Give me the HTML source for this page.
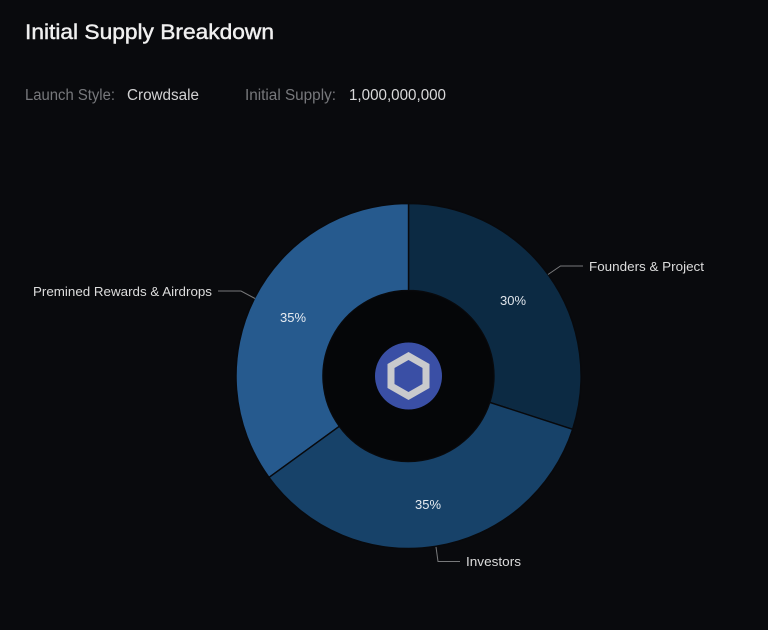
<!DOCTYPE html>
<html>
<head>
<meta charset="utf-8">
<style>
html,body{margin:0;padding:0;background:#090a0d;}
body{width:768px;height:630px;overflow:hidden;position:relative;}
svg{position:absolute;left:0;top:0;}
text{font-family:"Liberation Sans",sans-serif;}
</style>
</head>
<body>
<svg width="768" height="630" viewBox="0 0 768 630" xmlns="http://www.w3.org/2000/svg">
  <defs><filter id="s" x="-5%" y="-20%" width="110%" height="140%"><feGaussianBlur stdDeviation="0.3"/></filter></defs>
  <rect width="768" height="630" fill="#090a0d"/>
  <g filter="url(#s)">
  <text x="25" y="39" font-size="21" fill="#f0f0f0" stroke="#f0f0f0" stroke-width="0.45" textLength="249" lengthAdjust="spacingAndGlyphs">Initial Supply Breakdown</text>
  <text x="25" y="100" font-size="15.5" fill="#77787b" textLength="90" lengthAdjust="spacingAndGlyphs">Launch Style:</text>
  <text x="127" y="100" font-size="15.5" fill="#d2d2d3" textLength="72" lengthAdjust="spacingAndGlyphs">Crowdsale</text>
  <text x="245" y="100" font-size="15.5" fill="#77787b" textLength="91" lengthAdjust="spacingAndGlyphs">Initial Supply:</text>
  <text x="349" y="100" font-size="15.5" fill="#d9d9da" textLength="97" lengthAdjust="spacingAndGlyphs">1,000,000,000</text>
  </g>

  <circle cx="408.5" cy="376" r="90" fill="#050608"/>
  <path d="M408.5 203.5A172.5 172.5 0 0 1 572.6 429.3L489.8 402.4A85.5 85.5 0 0 0 408.5 290.5Z" fill="#0c2a43" stroke="#08090c" stroke-width="1.4" stroke-linejoin="round"/>
  <path d="M269 477.4A172.5 172.5 0 0 1 408.5 203.5L408.5 290.5A85.5 85.5 0 0 0 339.3 426.3Z" fill="#265a8e" stroke="#08090c" stroke-width="1.4" stroke-linejoin="round"/>
  <path d="M572.6 429.3A172.5 172.5 0 0 1 269 477.4L339.3 426.3A85.5 85.5 0 0 0 489.8 402.4Z" fill="#174269" stroke="#08090c" stroke-width="1.4" stroke-linejoin="round"/>

  <circle cx="408.5" cy="376" r="33.5" fill="#3a4fa5"/>
  <path d="M408.5 356L426 366V386L408.5 396L391 386V366Z" fill="none" stroke="#c9cacd" stroke-width="7"/>

  <path d="M548 274.5L560.5 266H583" fill="none" stroke="#77787a" stroke-width="1"/>
  <path d="M218 291H241L255 298.5" fill="none" stroke="#77787a" stroke-width="1"/>
  <path d="M436 547L438 561.5H460" fill="none" stroke="#77787a" stroke-width="1"/>

  <g filter="url(#s)">
  <text x="589" y="271" font-size="13" fill="#dcdcdc" textLength="115" lengthAdjust="spacingAndGlyphs">Founders &amp; Project</text>
  <text x="33" y="296" font-size="13" fill="#dcdcdc" textLength="179" lengthAdjust="spacingAndGlyphs">Premined Rewards &amp; Airdrops</text>
  <text x="466" y="566" font-size="13" fill="#dcdcdc" textLength="55" lengthAdjust="spacingAndGlyphs">Investors</text>
  <text x="500" y="305" font-size="13" fill="#dfe4ea" textLength="26" lengthAdjust="spacingAndGlyphs">30%</text>
  <text x="280" y="322" font-size="13" fill="#e6ebf1" textLength="26" lengthAdjust="spacingAndGlyphs">35%</text>
  <text x="415" y="509" font-size="13" fill="#e6ebf1" textLength="26" lengthAdjust="spacingAndGlyphs">35%</text>
  </g>
</svg>
</body>
</html>
